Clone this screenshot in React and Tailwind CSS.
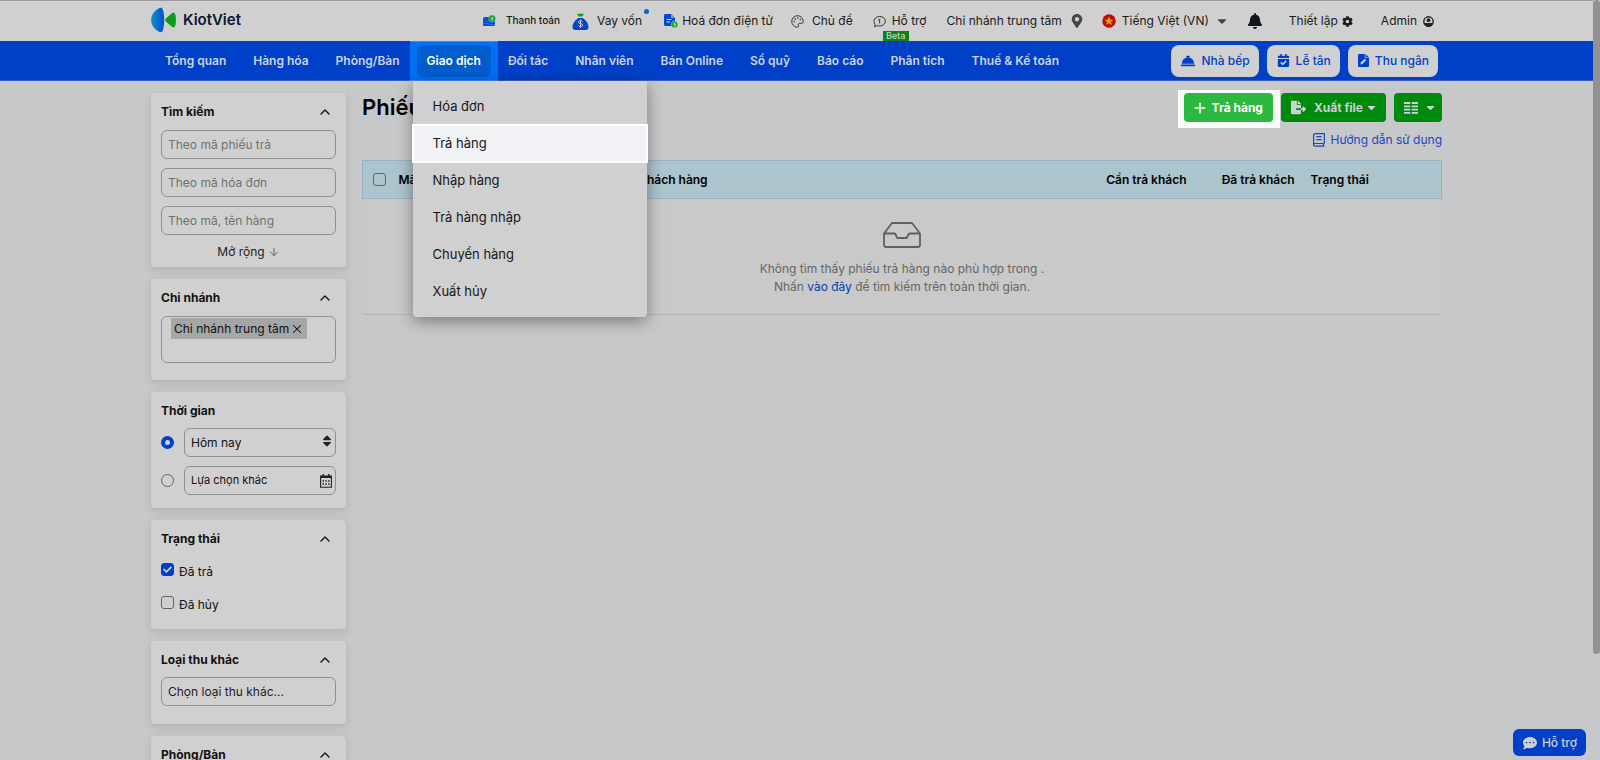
import { useState } from "react";
import { FaBell, FaCalendarCheck, FaCaretDown, FaCog, FaCommentDots, FaConciergeBell, FaFileExport, FaMapMarkerAlt, FaSort } from "react-icons/fa";
import { ArrowDown, ChevronUp, Plus, X } from "lucide-react";

const NAV = ["Tổng quan", "Hàng hóa", "Phòng/Bàn", "Giao dịch", "Đối tác", "Nhân viên", "Bán Online", "Sổ quỹ", "Báo cáo", "Phân tích", "Thuế & Kế toán"];
const MENU = ["Hóa đơn", "Trả hàng", "Nhập hàng", "Trả hàng nhập", "Chuyển hàng", "Xuất hủy"];

const field = "h-[29px] w-full rounded-md border border-[#8f8f8f] bg-transparent px-1.5 text-xs outline-none";

function Logo() {
  return (
    <a href="#" className="mb-0.5 flex items-center gap-1.5 text-[15px] font-semibold text-[#0b1730]">
      <svg width="26" height="26" viewBox="0 0 26 26">
        <defs>
          <linearGradient id="logoBlue" x1="0" x2="1">
            <stop offset="0" stopColor="#0c93c9" />
            <stop offset="1" stopColor="#0450cf" />
          </linearGradient>
        </defs>
        <path d="M8 1.300C10.500 0 11.700 1.500 12.300 4C13.500 10 13.500 16 12.300 22C11.700 24.500 10.500 26 8 24.700C-2.500 19 -2.500 7 8 1.300Z" fill="url(#logoBlue)" />
        <path d="M21.300 6C23 5 24 6 24.400 8C25.200 11.500 25.200 14.500 24.400 18C24 20 23 21 21.300 20L15.100 14.700C13.900 13.600 13.900 12.400 15.100 11.300Z" fill="#0a9e16" />
      </svg>
      KiotViet
    </a>
  );
}

function CardIcon() {
  return (
    <svg width="13" height="12" viewBox="0 0 13 12">
      <path d="M2 2h6v3h4v5a1 1 0 0 1-1 1H1a1 1 0 0 1-1-1V4a2 2 0 0 1 2-2Z" fill="#0a4fd0" />
      <path d="M0 8.500h5l1.500 1H12" fill="none" stroke="#2f74dd" strokeWidth=".7" />
      <circle cx="9" cy="3.600" r="3.500" fill="#0b9d24" stroke="#d0d0d0" strokeWidth=".4" />
      <path d="M10.300 2.500H8.300v1.200h1.800v1.300H7.900" fill="none" stroke="#d0d0d0" strokeWidth=".8" />
    </svg>
  );
}

function MoneyBagIcon() {
  return (
    <svg width="17" height="17" viewBox="0 0 17 17">
      <path d="M5 0.500 7 1l1.500-.5L10 1l2-.5-1.600 3H6.600Z" fill="#08a01b" />
      <path d="M6.200 5h4.600c4 3 5.700 6.200 5.700 9 0 2-1 3-3 3h-10c-2 0-3-1-3-3 0-2.800 1.700-6 5.700-9Z" fill="#0744c9" />
      <path d="M10.500 8.700c-.4-.7-1-1-2-1-1.200 0-2 .6-2 1.500 0 2.200 4.200.8 4.200 3 0 1-.9 1.500-2.100 1.500-1 0-1.800-.4-2.200-1.100M8.500 6.700v8" fill="none" stroke="#d0d0d0" />
    </svg>
  );
}

function InvoiceIcon() {
  return (
    <svg width="14" height="14" viewBox="0 0 14 14">
      <path d="M1.500 0H7l4 4v8H1.500C.6 12 0 11.400 0 10.500v-9C0 .6.600 0 1.500 0Z" fill="#0648cb" />
      <path d="M7 0v4h4Z" fill="#65a2df" />
      <path d="M2.500 5.500h5M2.500 8h3.500" stroke="#d0d0d0" />
      <circle cx="10.500" cy="10.500" r="3.300" fill="#0b9d24" stroke="#d0d0d0" strokeWidth=".5" />
      <path d="M11.700 9.300H9.800v1.200h1.800v1.300H9.400" fill="none" stroke="#d0d0d0" strokeWidth=".8" />
    </svg>
  );
}

function PaletteIcon() {
  return (
    <svg width="13" height="13" viewBox="0 0 13 13" fill="none" stroke="#333" strokeWidth="1">
      <path d="M6.500.7a5.700 5.700 0 1 0 0 11.500c1.200 0 1.300-1 .9-1.800-.5-1.100.2-2.100 1.400-2.100h1.700c1.100 0 1.700-.7 1.700-1.800C12.200 3.200 9.700.7 6.500.7Z" />
      <g fill="#333" stroke="none">
        <circle cx="3.300" cy="6.500" r=".8" />
        <circle cx="4.300" cy="3.900" r=".8" />
        <circle cx="6.900" cy="3" r=".8" />
        <circle cx="9.400" cy="4.500" r=".8" />
      </g>
    </svg>
  );
}

function HelpBubbleIcon() {
  return (
    <svg width="13" height="13" viewBox="0 0 13 13" fill="none" stroke="#333">
      <path d="M1 11.300c.9-.6 1.200-1.200 1-2.100A4.600 4.600 0 0 1 1 6.200C1 3.500 3.400 1.500 6.700 1.500s5.600 2 5.600 4.700-2.300 4.800-5.600 4.800c-.9 0-1.600-.1-2.400-.4-.8.500-1.900.8-3.300.7Z" />
      <path d="M5.300 5 6.700 4.200v4.300" />
    </svg>
  );
}

function FlagIcon() {
  return (
    <svg width="14" height="14" viewBox="0 0 14 14">
      <circle cx="7" cy="7" r="6.700" fill="#c00a0a" />
      <path d="m7 2.500 1.300 2.900 3.200.3-2.400 2.100.7 3.100L7 9.300l-2.800 1.600.7-3.100-2.400-2.100 3.200-.3Z" fill="#d9a400" />
    </svg>
  );
}

function UserIcon() {
  return (
    <svg width="11" height="11" viewBox="0 0 11 11">
      <circle cx="5.500" cy="5.500" r="4.700" fill="none" stroke="#222" strokeWidth="1.400" />
      <circle cx="5.500" cy="4.200" r="1.900" fill="#222" />
      <path d="M1 6.900h9C9.500 9.300 7.700 10.800 5.500 10.800S1.500 9.300 1 6.900Z" fill="#222" />
    </svg>
  );
}

function FileEditIcon() {
  return (
    <svg width="11" height="13" viewBox="0 0 11 13">
      <path d="M1 0h5.800v3.800H11V12a1 1 0 0 1-1 1H1a1 1 0 0 1-1-1V1a1 1 0 0 1 1-1Z" fill="#0040c4" />
      <path d="M7.500 0 11 3.200H7.500Z" fill="#0040c4" />
      <path d="m2.300 10.500.5-2 4-3.700 1.400 1.400-3.900 3.900Z" fill="#d0d0d0" />
    </svg>
  );
}

function GuideIcon() {
  return (
    <svg width="12" height="14" viewBox="0 0 12 14" fill="none" stroke="#1846c2" strokeWidth="1.200">
      <path d="M11.400 10.500V.7H2.200C1.300.7.600 1.300.6 2.200v9.500c0 .9.700 1.500 1.600 1.500h9.200M11 10.500H2.200c-1 0-1.600.5-1.600 1.300M10.500 10.500v2.700M3.200 3.700h5.500M3.200 6.700h5.500" />
    </svg>
  );
}

function ColumnsIcon() {
  return (
    <svg width="14" height="12" viewBox="0 0 14 12" stroke="#d0d0d0" strokeWidth="1.800">
      <path d="M0 1h6.300M7.700 1H14M0 4.300h6.300M7.700 4.300H14M0 7.600h6.300M7.700 7.600H14M0 10.900h6.300M7.700 10.900H14" />
    </svg>
  );
}

function CalendarIcon() {
  return (
    <svg width="12" height="14" viewBox="0 0 12 14" fill="none" stroke="#222">
      <path d="M.6 2h10.800v11.200H.6Z" strokeWidth="1.100" />
      <path d="M.6 3h10.800" strokeWidth="2" />
      <path d="M3.200 0v3M8.800 0v3" strokeWidth="1.500" />
      <path d="M2.500 7h7.500M2.500 10h7.500" strokeWidth="1.400" strokeDasharray="1.500 1.300" />
    </svg>
  );
}

function InboxIcon() {
  return (
    <svg width="38" height="26" viewBox="0 0 38 26" fill="none" stroke="#606060" strokeWidth="1.800" strokeLinejoin="round">
      <path d="M1 11.500 9 1h20l8 10.500V23a2 2 0 0 1-2 2H3a2 2 0 0 1-2-2ZM1 11.500h11l2.300 4.500h9.400l2.300-4.500h11" />
    </svg>
  );
}

function Panel({ title, collapsible = true, className = "", children }) {
  return (
    <section className={`rounded bg-[#d0d0d0] px-2.5 pt-2.5 shadow-[0_3px_10px_rgba(0,0,0,0.12)] ${className}`}>
      <div className="flex h-[18px] items-center justify-between pr-[3px]">
        <h2 className="text-xs font-bold">{title}</h2>
        {collapsible && <button aria-label={`Thu gọn ${title}`}><ChevronUp size={16} strokeWidth={2} /></button>}
      </div>
      {children}
    </section>
  );
}

function Check({ label, className = "", ...props }) {
  return (
    <label className={`flex items-start gap-[5px] text-xs leading-[18px] ${className}`}>
      <span className="relative flex">
        <input type="checkbox" className="peer size-[13px] appearance-none rounded-[3px] border border-[#5f6570] checked:border-[#0040c4] checked:bg-[#0040c4]" aria-label={label ? undefined : "Chọn tất cả"} {...props} />
        <svg className="pointer-events-none absolute inset-0 hidden peer-checked:block" width="13" height="13" viewBox="0 0 13 13" fill="none" stroke="#d0d0d0" strokeWidth="1.700">
          <path d="m2.500 6 2.900 2.900 5-5" />
        </svg>
      </span>
      {label}
    </label>
  );
}

function Sidebar() {
  const [range, setRange] = useState("today");
  const radio = "size-[13px] shrink-0 appearance-none rounded-full border border-[#5f6570] checked:border-[4px] checked:border-[#0040c4]";
  return (
    <aside className="flex w-[195px] shrink-0 flex-col gap-3">
      <Panel title="Tìm kiếm" className="h-[174px]">
        <div className="mt-[9px] flex flex-col gap-[9px]">
          {["Theo mã phiếu trả", "Theo mã hóa đơn", "Theo mã, tên hàng"].map((p) => (
            <input key={p} aria-label={p} placeholder={p} className={`${field} placeholder:text-[#707070]`} />
          ))}
        </div>
        <button className="mx-auto mt-[9px] flex items-center gap-[3px] text-xs text-[#222]">
          Mở rộng <ArrowDown size={12} strokeWidth={1.800} className="text-[#555]" />
        </button>
      </Panel>
      <Panel title="Chi nhánh" className="h-[101px]">
        <div className="mt-[9px] h-[47px] rounded-md border border-[#8f8f8f] px-[9px] pt-px">
          <span className="flex h-[21px] w-fit items-center gap-px bg-[#a6a6a6] px-[3px] text-xs text-[#111]">
            Chi nhánh trung tâm
            <button aria-label="Bỏ chi nhánh"><X size={14} strokeWidth={1.800} /></button>
          </span>
        </div>
      </Panel>
      <Panel title="Thời gian" collapsible={false} className="h-[116px]">
        <div className="mt-2 flex flex-col gap-[9px]">
          <div className="flex items-center gap-2.5">
            <input type="radio" name="range" aria-label="Hôm nay" className={radio} checked={range === "today"} onChange={() => setRange("today")} />
            <div className="relative flex-1">
              <select aria-label="Khoảng thời gian" className={`${field} appearance-none`}>
                <option>Hôm nay</option>
              </select>
              <FaSort size={14} className="pointer-events-none absolute top-[6px] right-[2px] text-[#222]" />
            </div>
          </div>
          <div className="flex items-center gap-2.5">
            <input type="radio" name="range" aria-label="Lựa chọn khác" className={radio} checked={range === "other"} onChange={() => setRange("other")} />
            <button className={`${field} flex items-center justify-between pr-[3px]`}>
              <span className="text-[11px]">Lựa chọn khác</span> <CalendarIcon />
            </button>
          </div>
        </div>
      </Panel>
      <Panel title="Trạng thái" className="h-[109px]">
        <Check label="Đã trả" defaultChecked className="mt-[15px] h-[18px]" />
        <Check label="Đã hủy" className="mt-[15px] h-[18px]" />
      </Panel>
      <Panel title="Loại thu khác" className="h-[83px]">
        <input aria-label="Loại thu khác" placeholder="Chọn loại thu khác..." className={`${field} mt-2 placeholder:text-[#1c1c1c]`} />
      </Panel>
      <Panel title="Phòng/Bàn" className="h-[83px]">
        <input aria-label="Phòng/Bàn" className={`${field} mt-2`} />
      </Panel>
    </aside>
  );
}

function TopBar() {
  const link = "flex items-center whitespace-nowrap";
  return (
    <header className="h-[41px] border-t border-[#9c9c9c] bg-[#d0d0d0]">
      <div className="mx-auto flex h-10 max-w-[1291px] items-center pr-2 text-xs text-[#1a1a1a]">
        <Logo />
        <a href="#" className={`${link} ml-auto gap-2.5 text-[10px] font-medium`}><CardIcon /> Thanh toán</a>
        <a href="#" className={`${link} relative ml-3 gap-2`}>
          <MoneyBagIcon /> Vay vốn
          <span className="absolute -top-1 -right-[7px] size-[5px] rounded-full bg-[#0a62c4]" />
        </a>
        <a href="#" className={`${link} ml-[22px] gap-1`}><InvoiceIcon /> Hoá đơn điện tử</a>
        <a href="#" className={`${link} ml-[18px] gap-2`}><PaletteIcon /> Chủ đề</a>
        <a href="#" className={`${link} relative ml-5 gap-1.5`}>
          <HelpBubbleIcon /> Hỗ trợ
          <span className="absolute top-[18px] left-2.5 h-[10px] w-[26px] bg-[#07850f] text-center text-[9px] leading-[10px] font-medium text-[#d0d0d0]">Beta</span>
        </a>
        <a href="#" className={`${link} ml-5 gap-2`}>Chi nhánh trung tâm <FaMapMarkerAlt size={14} className="text-[#444]" /></a>
        <a href="#" className={`${link} ml-[18px] gap-1.5`}>
          <FlagIcon /> Tiếng Việt (VN) <FaCaretDown size={14} className="text-[#444]" />
        </a>
        <button aria-label="Thông báo" className="ml-[18px]"><FaBell size={16} className="text-[#0e1620]" /></button>
        <a href="#" className={`${link} ml-[26px] gap-1`}>Thiết lập <FaCog size={11} /></a>
        <a href="#" className={`${link} ml-7 gap-1.5`}>Admin <UserIcon /></a>
      </div>
    </header>
  );
}

function Menu() {
  return (
    <ul className="absolute top-9 left-0 z-10 w-[234px] rounded-b bg-[#d0d0d0] pt-2 pb-1.5 text-[13px] font-normal text-[#161616] shadow-[0_4px_16px_rgba(0,0,0,0.4)]">
      {MENU.map((item) => (
        <li key={item} className="relative">
          {item === "Trả hàng" && <span className="absolute -inset-x-px -top-0.5 bottom-0 border-2 border-white bg-[#f0f2f5]" />}
          <a href="#" className="relative flex h-[37px] items-center px-5">{item}</a>
        </li>
      ))}
    </ul>
  );
}

function NavBar() {
  const shortcut = "flex h-8 items-center gap-1.5 rounded-lg bg-[#d0d0d0] pr-[9px] pl-2.5 text-xs font-medium text-[#0040c4]";
  return (
    <nav className="h-10 border-b border-[#3c5cc0] bg-[#0040c8]">
      <div className="mx-auto flex h-[39px] max-w-[1291px] items-center pr-1 text-xs font-semibold text-[#ccd3e4]">
        {NAV.map((item) =>
          item === "Giao dịch" ? (
            <div key={item} className="relative pr-[3px] pl-1">
              <span className="absolute -top-1 -right-1 -left-[3px] h-10 border-y border-[#3d8af0] bg-[#0070f5]" />
              <button className="relative h-8 rounded-md bg-[#005dce] px-2.5 text-white">{item}</button>
              <Menu />
            </div>
          ) : (
            <a key={item} href="#" className="pr-[13px] pl-3.5 whitespace-nowrap">{item}</a>
          )
        )}
        <div className="ml-auto flex gap-2">
          <button className={shortcut}><FaConciergeBell size={14} /> Nhà bếp</button>
          <button className={shortcut}><FaCalendarCheck size={13} /> Lễ tân</button>
          <button className={shortcut}><FileEditIcon /> Thu ngân</button>
        </div>
      </div>
    </nav>
  );
}

function Main() {
  const button = "flex h-[29px] items-center rounded text-xs font-bold";
  return (
    <main className="min-w-0 flex-1">
      <div className="flex h-[29px] items-center">
        <h1 className="text-[22px] font-semibold text-black">Phiếu trả hàng</h1>
        <div className="ml-auto flex gap-2">
          <div className="relative">
            <span className="absolute -top-[3px] -right-[7px] -bottom-1.5 -left-1.5 bg-[#fafbfd]" />
            <button className={`${button} relative gap-1 bg-[#2db83f] pr-2.5 pl-2 text-white`}><Plus size={16} strokeWidth={2.500} /> Trả hàng</button>
          </div>
          <button className={`${button} gap-2 bg-[#008a0d] pr-2 pl-2.5 text-[#d0d0d0]`}>
            <FaFileExport size={15} /> <span className="flex items-center gap-0.5">Xuất file <FaCaretDown size={13} /></span>
          </button>
          <button aria-label="Chọn cột hiển thị" className={`${button} gap-1.5 bg-[#008a0d] pr-[5px] pl-2.5 text-[#d0d0d0]`}>
            <ColumnsIcon /> <FaCaretDown size={13} />
          </button>
        </div>
      </div>
      <div className="mt-[9px] flex justify-end">
        <a href="#" className="flex h-[18px] items-center gap-[5px] text-xs text-[#1846c2]"><GuideIcon /> Hướng dẫn sử dụng</a>
      </div>
      <table className="mt-[11px] w-full table-fixed border-collapse text-xs">
        <colgroup>
          <col className="w-[28px]" />
          <col className="w-[240px]" />
          <col />
          <col className="w-[108px]" />
          <col className="w-[108px]" />
          <col className="w-[139px]" />
        </colgroup>
        <thead>
          <tr className="h-[38px] border border-[#95b3c4] bg-[#acc4cc] text-left text-black">
            <th className="pl-2.5"><Check /></th>
            <th className="px-2 font-semibold">Mã trả hàng</th>
            <th className="px-2 font-semibold">Khách hàng</th>
            <th className="px-2 text-right font-semibold">Cần trả khách</th>
            <th className="px-2 text-right font-semibold">Đã trả khách</th>
            <th className="px-2 font-semibold">Trạng thái</th>
          </tr>
        </thead>
        <tbody>
          <tr className="border-b border-[#b4b4b4] bg-[#c9c9c9]">
            <td colSpan={6} className="h-[116px] pt-[23px] pb-[17px] text-center align-top leading-[18px] text-[#666]">
              <div className="mb-3 flex justify-center"><InboxIcon /></div>
              Không tìm thấy phiếu trả hàng nào phù hợp trong .<br />
              Nhấn <a href="#" className="text-[#0040b4]">vào đây</a> để tìm kiếm trên toàn thời gian.
            </td>
          </tr>
        </tbody>
      </table>
    </main>
  );
}

export default function App() {
  return (
    <div className="flex h-screen overflow-hidden bg-[#c7c8ca] font-['Inter',sans-serif] text-[#111]">
      <div className="min-w-0 flex-1">
        <TopBar />
        <NavBar />
        <div className="mx-auto flex max-w-[1291px] items-start gap-4 pt-3">
          <Sidebar />
          <Main />
        </div>
      </div>
      <div className="w-[7px] shrink-0">
        <div className="h-[86%] rounded-full bg-[#929292]" />
      </div>
      <button className="fixed right-3.5 bottom-1 flex h-[27px] items-center gap-[5px] rounded-md bg-[#0040c8] pr-[9px] pl-2.5 text-xs font-medium text-[#d0d0d0]">
        <FaCommentDots size={14} /> Hỗ trợ
      </button>
    </div>
  );
}
